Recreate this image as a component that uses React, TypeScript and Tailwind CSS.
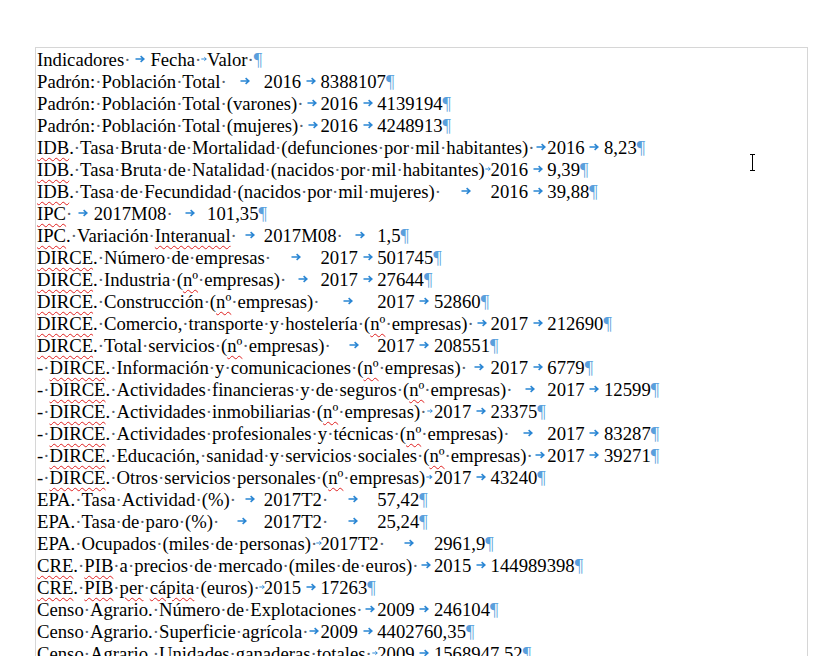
import React from 'react';

// ~word~ marks a word flagged by the spell checker
const lines: string[] = [
  'Indicadores \tFecha \tValor ',
  'Padrón: Población Total \t2016\t8388107',
  'Padrón: Población Total (varones) \t2016\t4139194',
  'Padrón: Población Total (mujeres) \t2016\t4248913',
  '~IDB~. Tasa Bruta de Mortalidad (defunciones por mil habitantes) \t2016\t8,23',
  '~IDB~. Tasa Bruta de Natalidad (nacidos por mil habitantes)\t2016\t9,39',
  '~IDB~. Tasa de Fecundidad (nacidos por mil mujeres) \t2016\t39,88',
  '~IPC~ \t2017M08 \t101,35',
  '~IPC~. Variación ~Interanual~ \t2017M08 \t1,5',
  '~DIRCE~. Número de empresas \t2017\t501745',
  '~DIRCE~. Industria (~nº~ empresas) \t2017\t27644',
  '~DIRCE~. Construcción (~nº~ empresas) \t2017\t52860',
  '~DIRCE~. Comercio, transporte y hostelería (~nº~ empresas) \t2017\t212690',
  '~DIRCE~. Total servicios (~nº~ empresas) \t2017\t208551',
  '- ~DIRCE~. Información y comunicaciones (~nº~ empresas) \t2017\t6779',
  '- ~DIRCE~. Actividades financieras y de seguros (~nº~ empresas) \t2017\t12599',
  '- ~DIRCE~. Actividades inmobiliarias (~nº~ empresas) \t2017\t23375',
  '- ~DIRCE~. Actividades profesionales y técnicas (~nº~ empresas) \t2017\t83287',
  '- ~DIRCE~. Educación, sanidad y servicios sociales (~nº~ empresas) \t2017\t39271',
  '- ~DIRCE~. Otros servicios personales (~nº~ empresas)\t2017\t43240',
  'EPA. Tasa Actividad (%) \t2017T2 \t57,42',
  'EPA. Tasa de paro (%) \t2017T2 \t25,24',
  'EPA. Ocupados (miles de personas) \t2017T2 \t2961,9',
  '~CRE~. ~PIB~ a precios de mercado (miles de euros) \t2015\t144989398',
  '~CRE~. ~PIB~ ~per~ ~cápita~ (euros) \t2015\t17263',
  'Censo Agrario. Número de Explotaciones \t2009\t246104',
  'Censo Agrario. Superficie agrícola \t2009\t4402760,35',
  'Censo Agrario. Unidades ganaderas totales \t2009\t1568947,52',
];

const Tab = () => (
  <span className="relative">
    {'\t'}
    <span className="absolute inset-0 flex items-center justify-center px-px pb-[2px]">
      <svg
        viewBox="0 0 10 8"
        className="h-[8px] w-full min-w-[6px] max-w-[10px] shrink-0"
        fill="none"
      >
        <path d="M0.5 4H8.6M5.6 1.2L8.8 4L5.6 6.8" stroke="#2a86d4" strokeWidth="1.6" />
      </svg>
    </span>
  </span>
);

const Dot = () => <span className="text-[#5a6470]">·</span>;

function renderLine(line: string) {
  const parts = line.split(/(~[^~]+~|\t| )/).filter((p) => p !== '');
  return parts.map((p, i) => {
    if (p === '\t') return <Tab key={i} />;
    if (p === ' ') return <Dot key={i} />;
    if (p.startsWith('~'))
      return (
        <span
          key={i}
          className="underline decoration-wavy decoration-[#e02020] decoration-1 underline-offset-[3px]"
        >
          {p.slice(1, -1)}
        </span>
      );
    return <span key={i}>{p}</span>;
  });
}

export default function App() {
  return (
    <div className="relative h-[656px] w-[824px] overflow-hidden bg-white">
      <div className="ml-[35px] mt-[47px] h-[620px] w-[773px] border-l border-r border-t border-[#d6d6d6] pl-px pt-px">
        <div className="font-['Liberation_Serif',serif] text-[18.7px] leading-[22px] text-black [tab-size:56.7px]">
          {lines.map((line, i) => (
            <div key={i} className="whitespace-pre">
              {renderLine(line)}
              <span className="text-[#5a9fdc]">¶</span>
            </div>
          ))}
        </div>
      </div>
      {/* mouse I-beam cursor */}
      <svg className="absolute left-[748px] top-[153px]" width="9" height="19" viewBox="0 0 9 19">
        <path
          d="M1.5 1.5H7.5M4.5 1.5V17.5M1.5 17.5H7.5"
          stroke="#fff"
          strokeWidth="2.6"
          fill="none"
        />
        <path d="M2 1.5H7M4.5 1.5V17.5M2 17.5H7" stroke="#000" strokeWidth="1" fill="none" />
      </svg>
    </div>
  );
}
